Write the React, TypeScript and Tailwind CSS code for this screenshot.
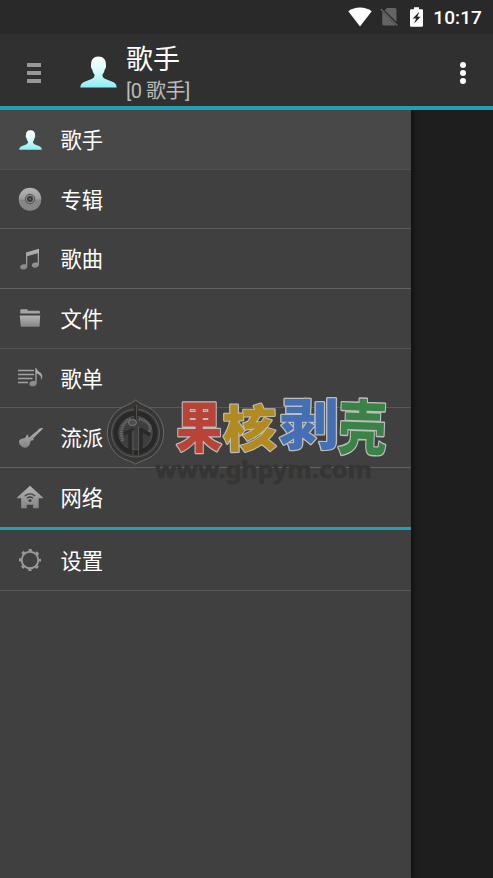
import type { ReactNode } from "react";

const FONT = "font-['Roboto','Noto_Sans_CJK_SC',sans-serif]";

function Gradients() {
  return (
    <svg className="absolute h-0 w-0" aria-hidden="true">
      <defs>
        <linearGradient id="ice" x1="0" y1="0" x2="0" y2="1">
          <stop offset="0" stopColor="#ffffff" />
          <stop offset="0.45" stopColor="#dcfafb" />
          <stop offset="1" stopColor="#8deff5" />
        </linearGradient>
        <linearGradient id="steel" x1="0" y1="0" x2="0" y2="1">
          <stop offset="0" stopColor="#b4b4b4" />
          <stop offset="1" stopColor="#858585" />
        </linearGradient>
      </defs>
    </svg>
  );
}

function Person({ className }: { className: string }) {
  return (
    <svg viewBox="0 0 37 32" className={className} preserveAspectRatio="none">
      <path
        fill="url(#ice)"
        d="M18.5 0.5c-4.9 0-7.400 3.200-7.400 7.500 0 1.100-.3 1.500-.1 2.800.2 1.500.7 2.100 1.300 2.600.4 2.400 1.300 4 2.200 5 .3 2.100-.8 3.500-3 4.600L4 26C1.300 27.400.500 28.700.300 31.500h36.400c-.2-2.800-1-4.100-3.700-5.500l-7.500-3c-2.200-1.100-3.300-2.500-3-4.600 .9-1 1.800-2.600 2.200-5 .6-.5 1.100-1.100 1.300-2.600.2-1.300-.1-1.700-.1-2.800 0-4.300-2.500-7.500-7.400-7.500z"
      />
    </svg>
  );
}

function Icon({ children }: { children: ReactNode }) {
  return (
    <svg viewBox="0 0 28 28" width="28" height="28" className="shrink-0">
      {children}
    </svg>
  );
}

const Disc = () => (
  <Icon>
    <circle cx="14" cy="14" r="11.200" fill="url(#steel)" />
    <path d="M2.800 14.500a11.200 11.200 0 0 0 22.400 0z" fill="#858585" />
    <circle cx="14" cy="14" r="4.700" fill="#8d8d8d" stroke="#484848" strokeWidth="0.900" />
    <circle cx="14" cy="14" r="3" fill="#3b3b3b" />
    <circle cx="14" cy="14" r="0.900" fill="#707070" />
  </Icon>
);

const Notes = () => (
  <Icon>
    <path
      fill="url(#steel)"
      d="M10 7.400 23 3.700V19.500c0 1.800-1.600 3.200-4 3.200-2 0-3.300-1-3.300-2.400 0-1.700 1.900-2.800 4.200-2.800.7 0 1.200.1 1.800.3V8.200l-10.400 3V21.500c0 1.800-1.600 3.100-3.900 3.100-2 0-3.300-1-3.300-2.400 0-1.700 1.900-3 4.200-3 .7 0 1.200.1 1.700.3z"
    />
  </Icon>
);

const Folder = () => (
  <Icon>
    <path fill="#a4a4a4" d="M4.300 8.500V5.200q0-.9.900-.9h5.700q.8 0 .8.900v.6h11.100q1.100 0 1.100 1.100v1.600z" />
    <path fill="url(#steel)" d="M3.800 10.600h20.400L23.500 21.800H4.800z" />
  </Icon>
);

const Playlist = () => (
  <Icon>
    <path
      stroke="#a2a2a2"
      strokeWidth="1.500"
      d="M2 6.600h16M2 10.600h16M2 14.500h14.500M2 18.500h10"
    />
    <path
      fill="url(#steel)"
      d="M19.300 4.200h1.200c.3 3.500 5.800 3.500 5.800 8 0 1.700-.6 3-1.500 4.100.5-2.400.5-5-4.100-6.700v9.300c0 2-1.600 3.400-4 3.400-2.100 0-3.400-1-3.400-2.400 0-1.700 1.700-2.900 3.900-2.900.8 0 1.500.1 2.100.4z"
    />
  </Icon>
);

const Guitar = () => (
  <Icon>
    <path
      fill="url(#steel)"
      d="m16.300 10.800 5.700-4.600c.3-1.500 2-1.600 4.400-2.400l.4.900-2.700 2.900-6.300 6.200c-.7.800-.6 1.300.1 1.800l-1.200.8c-1.500-.1-2.300.5-2.400 1.700 0 1.300-.7 3.500-2.500 4.600-2.100 1.500-4.700 1.200-6.600-.6-1.900-1.700-2.800-4-1.900-5.500.9-1.600 2.900-1.900 4.700-2.300 1.800-.3 2-1.900 2.700-3.300l1.900-.6c-.9 1.600-.7 2.600.4 2.800.9.200 2.200-1.300 3.300-2.400z"
    />
    <path stroke="#808080" strokeWidth="0.600" d="m7.800 18 2 1.900" />
  </Icon>
);

const House = () => (
  <Icon>
    <path
      fill="url(#steel)"
      d="M14 1.700 27 13.500v.8h-4.300v9.900h-5.500v-3.400h-6.400v3.400H5.200v-9.900H1v-.8z"
    />
    <g fill="none" stroke="#444444" strokeWidth="1.300">
      <path d="M8.800 11.900q5.200-4 10.400 0M10.900 14.200q3.100-2.400 6.200 0" />
    </g>
    <circle cx="14" cy="16.500" r="1.600" fill="#444444" />
  </Icon>
);

const Gear = () => (
  <Icon>
    <circle cx="14" cy="14" r="8.300" fill="none" stroke="#999999" strokeWidth="1.900" />
    <circle
      cx="14"
      cy="14"
      r="9.900"
      fill="none"
      stroke="#999999"
      strokeWidth="2.300"
      strokeDasharray="3.200 4.575"
      strokeDashoffset="1.600"
    />
  </Icon>
);

function StatusBar() {
  return (
    <div className="flex h-[34px] shrink-0 items-center justify-end bg-[#292929] pr-[11px] text-white">
      <svg viewBox="0 0 24 20" width="24" height="20" className="mr-[8px]">
        <path fill="#fff" d="M0.300 4.200C7 -.7 17-.7 23.700 4.200L12 19.500z" />
      </svg>
      <svg viewBox="0 0 18 20" width="18" height="20" className="mr-[12px]">
        <path fill="#646464" d="M7 .9h8q1.500 0 1.500 1.500v12.300L4.600 3.200zM2.300 4.500 15.600 18.300q-.4.300-1 .3H3.800q-1.500 0-1.500-1.500z" />
        <path stroke="#646464" strokeWidth="1.500" d="m.8 2 16.500 16.500" />
      </svg>
      <svg viewBox="0 0 13 20" width="13" height="20" className="mr-[10px]">
        <path fill="#fff" d="M4 .3h5v2h2.900q1.100 0 1.100 1.100v15.200q0 1.200-1.100 1.200H1.100Q0 19.800 0 18.600V3.400q0-1.100 1.100-1.100H4z" />
        <path fill="#292929" d="M9.300 4.800 2.700 11.500h3.400l-2.200 5.300 6.800-7H7.400z" />
      </svg>
      <span className="mt-[2px] text-[19px] leading-[32px] font-medium tracking-[0.100px]">10:17</span>
    </div>
  );
}

function Header() {
  return (
    <header className="relative z-10 flex h-[76px] shrink-0 border-b-4 border-[#20a0b4] bg-[#303030]">
      <div className="mt-[29px] ml-[27px] flex w-[14px] flex-col gap-[4px]">
        <i className="h-[4px] bg-[#989898]" />
        <i className="h-[4px] bg-[#989898]" />
        <i className="h-[4px] bg-[#989898]" />
      </div>
      <Person className="mt-[22px] ml-[39px] h-[32px] w-[37px]" />
      <div className="ml-[9px] flex-1 whitespace-nowrap">
        <div className="mt-[10px] h-[32px] text-[27px] leading-[32px] text-white">歌手</div>
        <div className="h-[30px] text-[20px] leading-[30px] tracking-[-0.500px] text-[#bababa]">[0 歌手]</div>
      </div>
      <div className="mt-[28px] mr-[27px] flex w-[6px] flex-col gap-[2px]">
        <i className="h-[6px] rounded-full bg-white" />
        <i className="h-[6px] rounded-full bg-white" />
        <i className="h-[6px] rounded-full bg-white" />
      </div>
    </header>
  );
}

function Row({ icon, label, className }: { icon: ReactNode; label: string; className: string }) {
  return (
    <li className={"flex items-center pl-4 text-[21.300px] leading-[30px] text-white " + className}>
      <span className="mr-[16.500px] flex w-[28px] justify-center">{icon}</span>
      <span className="pt-[3px]">{label}</span>
    </li>
  );
}

function Watermark() {
  return (
    <svg
      className="pointer-events-none absolute top-[270px] left-[100px]"
      width="300"
      height="125"
      viewBox="100 380 300 125"
    >
      <g fill="none" stroke="#292929">
        <path
          d="M135.500 400c5 5 11 5 17 10 15 12 14 33 2 44-6 6-13 6-19 10-6-4-13-4-19-10-12-11-13-32 2-44 6-5 12-5 17-10z"
          stroke="#6c6c6c"
          strokeWidth="1"
          fill="#373635"
        />
        <circle cx="135.500" cy="433" r="24" strokeWidth="0.700" stroke="#666" fill="#3e3e3e" />
        <circle cx="135.500" cy="433" r="19.500" strokeWidth="5" stroke="#292827" />
        <circle cx="135.500" cy="433" r="16.700" strokeWidth="0.600" stroke="#5c5c5c" />
        <path d="M123 441c-5-12 2-20 8-22M139 419c10 2 13 8 10 13" stroke="#686868" strokeWidth="3" strokeDasharray="1.500 .7" />
        <path d="M136 407v12M130 431v21M124 434l10-5M141 428v22M142 430l8 5" stroke="#2c2a29" strokeWidth="3.500" />
        <path d="M133 430v25M138.500 427v28" stroke="#626262" strokeWidth="0.700" />
        <path d="M136.500 405v14" stroke="#626262" strokeWidth="0.700" />
        <ellipse cx="132.500" cy="422.500" rx="4" ry="3" stroke="#7b7b7b" fill="#4c4c4c" />
      </g>
      <g
        fontFamily="'Noto Sans CJK SC', sans-serif"
        fontWeight="900"
        stroke="#bdbdb8"
        strokeWidth="2.200"
        strokeLinejoin="round"
        paintOrder="stroke"
        fontSize="48"
      >
        <text transform="translate(176 446.500) scale(.96 1.130)" fill="#b74339">果</text>
        <text transform="translate(223 447.500) rotate(-1) scale(1.120 1.040)" fill="#b18a20">核</text>
        <text transform="translate(279 443.500) scale(1.250 1.140)" fill="#456fb4">剥</text>
        <text transform="translate(337.500 448.500) rotate(2) scale(1.010 1.230)" fill="#398348">壳</text>
      </g>
      <text
        x="155"
        y="478"
        textLength="217"
        lengthAdjust="spacingAndGlyphs"
        fontFamily="'Noto Sans', sans-serif"
        fontWeight="700"
        fontSize="24"
        fill="#363534"
        stroke="#363534"
        strokeWidth="0.600"
      >
        www.ghpym.com
      </text>
    </svg>
  );
}

export default function App() {
  return (
    <div className={"flex h-[878px] w-[493px] flex-col overflow-hidden bg-[#1e1e1e] " + FONT}>
      <Gradients />
      <StatusBar />
      <Header />
      <div className="relative flex flex-1">
        <nav className="w-[411px] bg-[#404040] shadow-[2px_0_5px_rgba(0,0,0,0.500)]">
          <ul>
            <Row
              icon={<Person className="h-[20px] w-[23px]" />}
              label="歌手"
              className="h-[60px] border-b border-[#505050] bg-[#484848]"
            />
            <Row icon={<Disc />} label="专辑" className="h-[59px] border-b border-[#5a5a5a]" />
            <Row icon={<Notes />} label="歌曲" className="h-[60px] border-b border-[#626262]" />
            <Row icon={<Folder />} label="文件" className="h-[60px] border-b border-[#555555]" />
            <Row icon={<Playlist />} label="歌单" className="h-[59px] border-b border-[#585858]" />
            <Row icon={<Guitar />} label="流派" className="h-[60px] border-b border-[#626262]" />
            <Row icon={<House />} label="网络" className="h-[62px] border-b-[3px] border-[#20a0b4]" />
            <Row icon={<Gear />} label="设置" className="h-[61px] border-b border-[#585858]" />
          </ul>
        </nav>
        <Watermark />
      </div>
    </div>
  );
}
